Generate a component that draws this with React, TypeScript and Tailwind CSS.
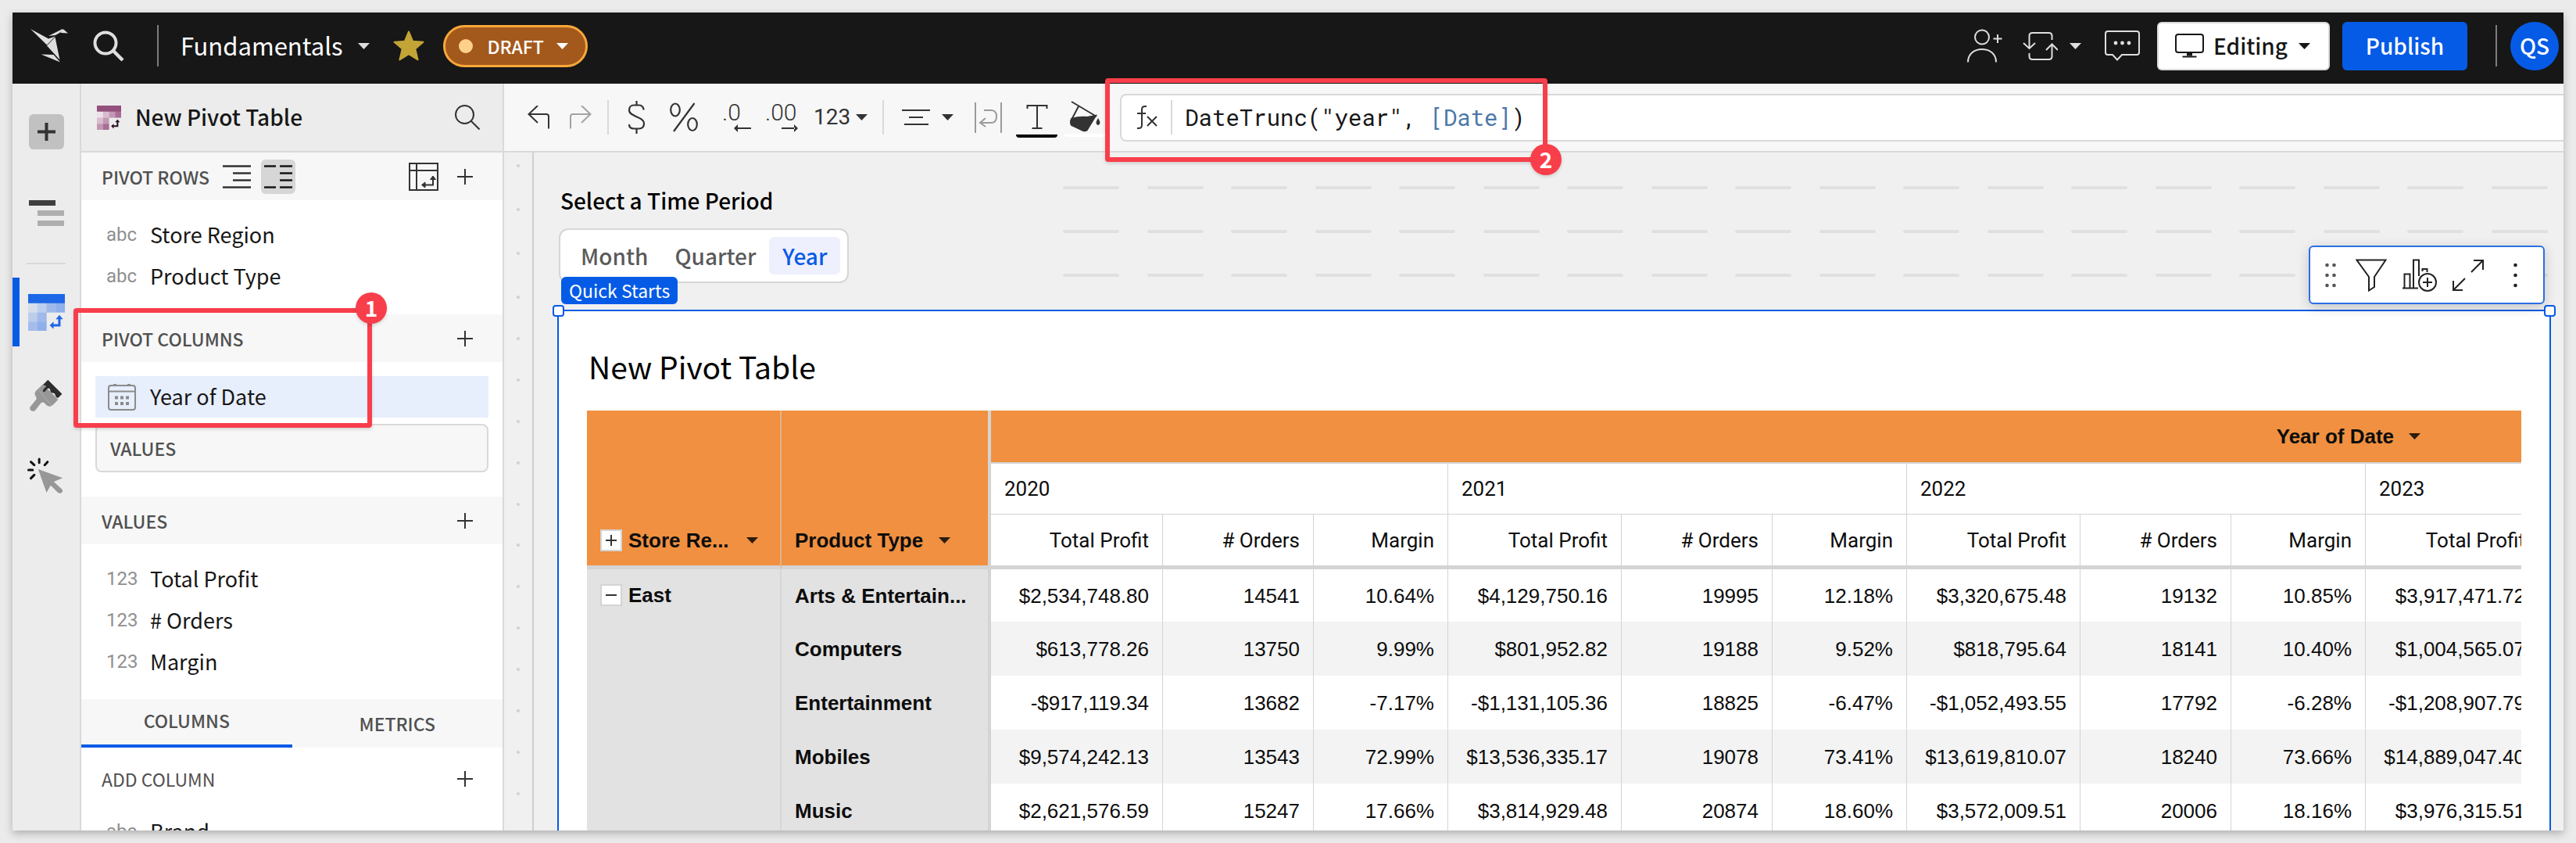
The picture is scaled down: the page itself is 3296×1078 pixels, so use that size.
import type { ReactNode } from "react";

const UI_FONT = "font-['Noto_Sans_CJK_SC',sans-serif]";

/* ---------- icons ---------- */

function Caret({ className = "" }: { className?: string }) {
  return (
    <svg className={`h-2 w-[15px] shrink-0 ${className}`} viewBox="0 0 15 8" fill="currentColor" aria-hidden="true">
      <path d="M0 0h15L7.500 8z" />
    </svg>
  );
}

function Plus({ className = "" }: { className?: string }) {
  return (
    <svg className={`size-5 shrink-0 ${className}`} viewBox="0 0 20 20" stroke="#333" strokeWidth="2" aria-hidden="true">
      <path d="M10 0v20M0 10h20" />
    </svg>
  );
}

function Logo() {
  return (
    <svg className="h-[43px] w-12 shrink-0" viewBox="0 0 48 43" fill="#dedede" aria-hidden="true">
      <path d="M0 0l23 12.500 8.500-3-10.500 11z" />
      <path d="M23 9L41 0l1 2.200L32 8z" />
      <path d="M42 .2l6 5.300-9.500-.6z" />
      <path d="M31.500 10.500L21 21.500l16.500 18z" />
      <path d="M13.500 32.500l16 .5L38 42.500z" />
    </svg>
  );
}

function StarIcon() {
  return (
    <svg className="size-10" viewBox="0 0 40 40" fill="#c2a437" stroke="#c2a437" strokeWidth="2" strokeLinejoin="round" aria-hidden="true">
      <path d="M20 1.500l5.200 12.300 13.300 1-10.200 8.600 3.300 14L20 30.200 8.400 37.400l3.300-14L1.500 14.800l13.300-1z" />
    </svg>
  );
}

function PivotGlyph({ head, cells, arrow, className }: { head: string; cells: string[]; arrow: string; className: string }) {
  const spots = [[0, 35], [35, 35], [70, 35], [105, 35], [0, 70], [35, 70], [0, 105], [35, 105]];
  return (
    <svg className={className} viewBox="0 0 140 140" aria-hidden="true">
      <rect width="140" height="36" fill={head} />
      {spots.map(([x, y], i) => (
        <rect key={i} x={x} y={y} width="35.500" height="35.500" fill={cells[i]} />
      ))}
      <path d="M119 92v27H92" fill="none" stroke={arrow} strokeWidth="9" />
      <path d="M105 96l14-16 14 16zM97 105l-15 14 15 14z" fill={arrow} />
    </svg>
  );
}

function BrushIcon() {
  return (
    <svg className="h-[43px] w-[46px]" viewBox="0 0 140 130" aria-hidden="true">
      <path
        fill="#979797"
        d="M58 22L30 48q-8 10 0 22 6 8-1 14L11 106q-8 8-2 16 8 8 18 2l22-28q6-6 14-2 16 22 32 10l22-22z"
      />
      <path d="M40 44l52 62" stroke="#bdbdbd" strokeWidth="2" />
      <path
        fill="#2d2d2d"
        d="M77 5l55 55-14 14q-8 4-12-8-2-10-10-10-10 0-10-12-4-10-12-4L64 52q-8 2-6-8l12-14-12-6z"
      />
    </svg>
  );
}

function CursorIcon() {
  return (
    <svg className="h-12 w-[47px]" viewBox="0 0 140 144" aria-hidden="true">
      <path fill="#979797" d="M44 48l94 34-34 14 30 28q8 8 0 14-8 6-16-2L92 110l-16 28z" />
      <path
        d="M48 9v14M80 20L69 32M16 20l13 12M7 51h16M16 83l13-13"
        stroke="#111"
        strokeWidth="9"
        strokeLinecap="round"
      />
    </svg>
  );
}

function CalendarIcon() {
  return (
    <svg className="h-[34px] w-9" viewBox="0 0 36 34" fill="none" stroke="#8b8b8b" strokeWidth="2" aria-hidden="true">
      <rect x="1" y="2" width="34" height="31" rx="3" />
      <path d="M1 9.500h34" />
      <path d="M9 0v2M27 0v2" strokeWidth="4" />
      <path d="M9 17.500h4M16 17.500h4M23 17.500h4M9 25h4M16 25h4M23 25h4" strokeWidth="4" />
    </svg>
  );
}

/* ---------- header ---------- */

function Header() {
  return (
    <header className={`flex h-[91px] shrink-0 items-center bg-[#171717] pr-1.5 pb-1.5 pl-[23px] text-white ${UI_FONT}`}>
      <Logo />
      <button aria-label="Search" className="ml-8">
        <svg className="size-10" viewBox="0 0 40 40" fill="none" stroke="#dedede" strokeWidth="4" aria-hidden="true">
          <circle cx="16" cy="16" r="13.500" />
          <path d="M26 26l12 12" strokeWidth="4.500" />
        </svg>
      </button>
      <span className="ml-[42px] h-[53px] w-0.5 bg-[#7c7c7c]" />
      <button className="ml-7 flex items-center gap-5 text-[31px] leading-10">
        <span className="-mt-0.5">Fundamentals</span>
        <Caret className="text-[#dedede]" />
      </button>
      <button aria-label="Favorite" className="ml-[30px]">
        <StarIcon />
      </button>
      <button className="ml-6 flex h-[54px] w-[185px] items-center rounded-full border-[3px] border-[#f9a83a] bg-[#a3591c] pl-[17px] text-[23px] leading-8 font-medium">
        <span className="size-[18px] rounded-full bg-[#ffd08a]" />
        <span className="ml-[18px]">DRAFT</span>
        <Caret className="ml-4" />
      </button>

      <div className="ml-auto flex items-center">
        <button aria-label="Share">
          <svg className="h-[43px] w-[45px]" viewBox="0 0 45 43" fill="none" stroke="#dedede" strokeWidth="2" aria-hidden="true">
            <circle cx="19" cy="10.500" r="9" />
            <path d="M1 42.500C1 32 9 26 19 26s18 6 18 16.500M39 7v11M33.500 12.500h11" />
          </svg>
        </button>
        <button className="ml-[26px] flex items-center gap-[15px]" aria-label="Versions">
          <svg className="h-9 w-[45px]" viewBox="0 0 45 36" fill="none" stroke="#dedede" strokeWidth="2" aria-hidden="true">
            <path d="M37.500 10V5q0-4-4-4H12.500q-4 0-4 4v15M1 14l7.500 7 7.500-7M8.500 27v4q0 4 4 4h21q4 0 4-4V16M30 23l7.500-7.500L45 23" />
          </svg>
          <Caret className="text-[#dedede]" />
        </button>
        <button aria-label="Comments" className="ml-[30px]">
          <svg className="h-[39px] w-[45px]" viewBox="0 0 45 39" fill="none" stroke="#dedede" strokeWidth="2" aria-hidden="true">
            <path d="M4 1h37q3 0 3 3v24q0 3-3 3H22l-6 6.500L10 31H4q-3 0-3-3V4q0-3 3-3z" />
            <g fill="#dedede" stroke="none">
              <circle cx="14" cy="16" r="2.400" />
              <circle cx="22.500" cy="16" r="2.400" />
              <circle cx="31" cy="16" r="2.400" />
            </g>
          </svg>
        </button>
        <button className="ml-[22px] flex h-[62px] w-[221px] items-center rounded-md border-2 border-[#dadada] bg-white pl-[21px] text-[28px] leading-10 font-medium text-[#171717]">
          <svg className="h-[31px] w-[37px]" viewBox="0 0 37 31" fill="none" stroke="#171717" strokeWidth="2" aria-hidden="true">
            <rect x="1" y="1" width="35" height="23" rx="3" />
            <path d="M9.500 29.500h18" />
            <path d="M15 26.500h7" strokeWidth="4" />
          </svg>
          <span className="-mt-0.5 ml-3">Editing</span>
          <Caret className="ml-3.5" />
        </button>
        <button className="ml-4 h-[62px] w-40 rounded-md bg-[#055be6] pb-0.5 text-[28px] leading-10 font-medium">Publish</button>
        <span className="ml-9 h-[53px] w-0.5 bg-[#7c7c7c]" />
        <button className="ml-[17px] size-[62px] rounded-full bg-[#055be6] pb-0.5 text-[28px] leading-10 font-medium">QS</button>
      </div>
    </header>
  );
}

/* ---------- left rail ---------- */

function Rail() {
  return (
    <nav className="flex w-[88px] shrink-0 flex-col border-r-2 border-[#d9d9d9] bg-[#ececec]" aria-label="Panels">
      <button aria-label="Add element" className="mt-[39px] ml-[21px] flex size-[45px] items-center justify-center rounded-md bg-[#c1c1c1]">
        <svg className="size-[23px]" viewBox="0 0 23 23" stroke="#333" strokeWidth="4" aria-hidden="true">
          <path d="M11.500 0v23M0 11.500h23" />
        </svg>
      </button>
      <button aria-label="Outline" className="mt-[65px] ml-[21px] flex w-[45px] flex-col gap-1.5">
        <span className="h-[7px] w-[34px] bg-[#3f3f3f]" />
        <span className="h-[7px] w-[34px] self-end bg-[#aeaeae]" />
        <span className="h-[7px] w-[34px] self-end bg-[#aeaeae]" />
      </button>
      <span className="mx-[18px] mt-[47px] h-0.5 bg-[#d9d9d9]" />
      <button aria-label="Element properties" className="mt-[17px] flex h-[88px] items-center border-l-[9px] border-[#055be6] pl-[11px]">
        <PivotGlyph
          className="size-[47px]"
          head="#1e67e6"
          arrow="#1e67e6"
          cells={["#d6deeb", "#bccfee", "#9fbaea", "#8fb0ea", "#bccdec", "#9fbaea", "#a4bcea", "#8fb0ea"]}
        />
      </button>
      <button aria-label="Element format" className="mt-[41px] ml-5">
        <BrushIcon />
      </button>
      <button aria-label="Actions" className="mt-[57px] ml-[18px]">
        <CursorIcon />
      </button>
    </nav>
  );
}

/* ---------- side panel ---------- */

function SectionBar({ title, children }: { title: string; children?: ReactNode }) {
  return (
    <div className="flex h-[61px] shrink-0 items-center bg-[#f7f7f7] pr-[38px] pl-[26px] text-[23px] leading-8 font-medium text-[#505050]">
      <h3>{title}</h3>
      {children}
      <button aria-label={`Add to ${title}`} className={children ? "ml-6" : "ml-auto"}>
        <Plus />
      </button>
    </div>
  );
}

function Field({ kind, name }: { kind: string; name: string }) {
  return (
    <li className="flex h-[53px] items-center pl-8">
      <span className="w-14 font-['Roboto',sans-serif] text-2xl leading-8 text-[#8f8f8f]">{kind}</span>
      <span>{name}</span>
    </li>
  );
}

function SidePanel() {
  return (
    <aside className={`flex w-[541px] shrink-0 flex-col border-r-2 border-[#d9d9d9] bg-white text-[27px] leading-10 text-[#171717] ${UI_FONT}`}>
      <div className="flex h-[88px] shrink-0 items-center border-b-2 border-[#d9d9d9] bg-[#ececec] pr-[29px] pl-5">
        <PivotGlyph
          className="size-[31px]"
          head="#93507c"
          arrow="#2b1020"
          cells={["#eee1ea", "#d8bccf", "#c397b4", "#a96e95", "#d8bccf", "#c397b4", "#c397b4", "#a96e95"]}
        />
        <h2 className="-mt-0.5 ml-[18px] text-[28px] font-medium">New Pivot Table</h2>
        <button aria-label="Search columns" className="ml-auto">
          <svg className="size-8" viewBox="0 0 32 32" fill="none" stroke="#333" strokeWidth="2" aria-hidden="true">
            <circle cx="12.500" cy="12.500" r="11.500" />
            <path d="M20.500 20.500L31.500 31.500" />
          </svg>
        </button>
      </div>

      <SectionBar title="PIVOT ROWS">
        <button aria-label="Single row header" className="ml-[17px]">
          <svg className="h-8 w-9" viewBox="0 0 36 32" stroke="#333" strokeWidth="2.500" aria-hidden="true">
            <path d="M0 2.500h36M13 11.500h23M13 20.500h23M0 29.500h36" />
          </svg>
        </button>
        <button aria-label="Separate columns" className="ml-[13px] flex size-11 items-center justify-center rounded-md bg-[#d6d6d6]">
          <svg className="h-8 w-9" viewBox="0 0 36 32" stroke="#171717" strokeWidth="2.500" aria-hidden="true">
            <path d="M0 2.500h15M20 2.500h16M20 11.500h16M20 20.500h16M0 29.500h15M20 29.500h16" />
          </svg>
        </button>
        <button aria-label="Swap rows and columns" className="ml-auto">
          <svg className="h-9 w-[38px]" viewBox="0 0 38 36" fill="none" stroke="#333" strokeWidth="2" aria-hidden="true">
            <path d="M1 1h36v34H1zM1 10h36M10 1v34M31 18v10.500H18" />
            <path d="M27.500 21.500L31 17l3.500 4.500zM21 25l-4.500 3.500L21 32z" fill="#333" strokeWidth="1" />
          </svg>
        </button>
      </SectionBar>
      <ul className="pt-[17px] pb-[23px]">
        <Field kind="abc" name="Store Region" />
        <Field kind="abc" name="Product Type" />
      </ul>

      <SectionBar title="PIVOT COLUMNS" />
      <div className="px-[18px] pt-[18px] pb-[31px]">
        <div className="flex h-[53px] items-center bg-[#e7eefc] pl-4">
          <CalendarIcon />
          <span className="-mt-0.5 ml-[18px]">Year of Date</span>
        </div>
        <div className="mt-2 flex h-[62px] items-center rounded-lg border-2 border-[#d9d9d9] bg-[#f7f7f7] pl-[17px] text-[23px] leading-8 font-medium text-[#505050]">
          VALUES
        </div>
      </div>

      <SectionBar title="VALUES" />
      <ul className="pt-[17px] pb-[22px]">
        <Field kind="123" name="Total Profit" />
        <Field kind="123" name="# Orders" />
        <Field kind="123" name="Margin" />
      </ul>

      <div role="tablist" className="flex h-[62px] shrink-0 bg-[#f7f7f7] text-[23px] leading-8 font-medium text-[#505050]">
        <button role="tab" aria-selected="true" className="flex-1 border-b-4 border-[#055be6] pb-1">
          COLUMNS
        </button>
        <button role="tab" aria-selected="false" className="flex-1">
          METRICS
        </button>
      </div>
      <div className="flex h-20 shrink-0 items-center pr-[38px] pl-[26px] text-[23px] leading-8 text-[#505050]">
        <span>ADD COLUMN</span>
        <button aria-label="Add column" className="ml-auto">
          <Plus />
        </button>
      </div>
      <ul>
        <Field kind="abc" name="Brand" />
      </ul>
    </aside>
  );
}

/* ---------- formatting toolbar ---------- */

function Divider({ className }: { className: string }) {
  return <span className={`h-11 w-0.5 shrink-0 bg-[#d9d9d9] ${className}`} />;
}

function Toolbar() {
  return (
    <div className="flex h-[88px] shrink-0 items-center border-b-2 border-[#d9d9d9] bg-[#f7f7f7] pl-[30px] font-['Roboto',sans-serif] text-[#333]">
      <button aria-label="Undo">
        <svg className="h-[30px] w-[29px]" viewBox="0 0 29 30" fill="none" stroke="#333" strokeWidth="2" aria-hidden="true">
          <path d="M1 11h23q3 0 3 3v15.500M13 0L1.500 11 13 22" />
        </svg>
      </button>
      <button aria-label="Redo" className="ml-6">
        <svg className="h-[30px] w-[29px]" viewBox="0 0 29 30" fill="none" stroke="#a3a3a3" strokeWidth="2" aria-hidden="true">
          <path d="M28 11H5q-3 0-3 3v15.500M16 0l11.500 11L16 22" />
        </svg>
      </button>
      <Divider className="ml-5" />
      <button aria-label="Currency" className="ml-[25px]">
        <svg className="h-[42px] w-[21px]" viewBox="0 0 21 42" fill="none" stroke="#333" strokeWidth="2.200" aria-hidden="true">
          <path d="M10.500 0v6M10.500 36v6M19.500 11.500C19.500 8 17 5.500 14 5.500H7c-3.500 0-6 2.500-6 6.500 0 8.500 19 8 19 17 0 4-2.500 6.500-6 6.500H7c-3.500 0-6-2-6-5.500" />
        </svg>
      </button>
      <button aria-label="Percent" className="ml-8">
        <svg className="h-[38px] w-9" viewBox="0 0 36 38" fill="none" stroke="#333" strokeWidth="2.200" aria-hidden="true">
          <ellipse cx="7" cy="9.500" rx="5.800" ry="8" />
          <ellipse cx="29" cy="28" rx="5.800" ry="8" />
          <path d="M31.500 1L5 37" />
        </svg>
      </button>
      <button aria-label="Decrease decimals" className="ml-[31px] flex w-[37px] flex-col">
        <span className="self-start text-3xl leading-[28px] font-light">.0</span>
        <svg className="h-3 w-[22px] self-end" viewBox="0 0 22 12" aria-hidden="true">
          <path d="M0 6l5-5v10zM4 5h18v2H4z" fill="#333" />
        </svg>
      </button>
      <button aria-label="Increase decimals" className="ml-[18px] flex w-[42px] flex-col">
        <span className="self-start text-3xl leading-[28px] font-light">.00</span>
        <svg className="h-3 w-[21px] self-end" viewBox="0 0 21 12" aria-hidden="true">
          <path d="M21 6l-5-5v10zM0 5h17v2H0z" fill="#333" />
        </svg>
      </button>
      <button className="ml-5 flex items-center gap-[7px] text-[28px] leading-8">
        123
        <Caret />
      </button>
      <Divider className="ml-[19px]" />
      <button aria-label="Align" className="ml-[23px] flex items-center gap-[15px]">
        <svg className="h-[22px] w-9" viewBox="0 0 36 22" stroke="#333" strokeWidth="2.200" aria-hidden="true">
          <path d="M0 2h36M9 11h18M3 20h31" />
        </svg>
        <Caret />
      </button>
      <button aria-label="Wrap text" className="ml-[27px]">
        <svg className="h-[39px] w-[35px]" viewBox="0 0 35 39" fill="none" stroke="#9b9b9b" strokeWidth="2" aria-hidden="true">
          <path d="M1 0v39M34 0v39M12 10h9q7 0 7 8t-7 8H8M14 20l-7 6 7 5" />
        </svg>
      </button>
      <button aria-label="Text color" className="mt-2 ml-[18px] flex w-[53px] flex-col items-center gap-[7px]">
        <svg className="h-8 w-7" viewBox="0 0 28 32" fill="none" stroke="#333" strokeWidth="2" aria-hidden="true">
          <path d="M1.500 6V2h25v4M14 2v29M7.500 31h13" />
        </svg>
        <span className="h-1 w-full rounded-b-sm bg-black" />
      </button>
      <button aria-label="Fill color" className="mt-1 ml-[9px] flex w-[53px] flex-col items-center gap-0.5">
        <svg className="h-10 w-[39px]" viewBox="0 0 39 40" fill="none" stroke="#333" strokeWidth="2" aria-hidden="true">
          <path d="M2 1l32 19M11 7L1 26" />
          <path d="M2 23q10-3 20-2l11-2-11 18q-2 2-5 1L2 31q-2-3 0-8z" fill="#333" />
          <path d="M36 24q3 5 0 6-3-1 0-6z" fill="#333" />
        </svg>
        <span className="h-1 w-full rounded-b-sm bg-white" />
      </button>
      <div className="ml-[18px] flex h-[61px] flex-1 items-center rounded-l-lg border-2 border-r-0 border-[#d9d9d9] bg-white">
        <svg className="ml-[19px] h-[30px] w-7" viewBox="0 0 28 30" fill="none" stroke="#333" strokeWidth="2" aria-hidden="true">
          <path d="M13 1h-2q-4 0-4 4v20q0 4-4 4H1M1 10h11M14 14l12 12M26 14L14 26" />
        </svg>
        <Divider className="ml-4" />
        <div
          role="textbox"
          aria-label="Formula"
          contentEditable
          suppressContentEditableWarning
          className="ml-4 flex-1 font-['Roboto_Mono','Liberation_Mono',monospace] text-[29px] leading-10 whitespace-pre text-[#171717] outline-none"
        >
          {'DateTrunc("year", '}
          <span className="text-[#4b78a8]">[Date]</span>)
        </div>
      </div>
    </div>
  );
}

/* ---------- pivot table ---------- */

const YEARS = ["2020", "2021", "2022"];
const ROWS: { type: string; cells: string[] }[] = [
  { type: "Arts & Entertain...", cells: ["$2,534,748.80", "14541", "10.64%", "$4,129,750.16", "19995", "12.18%", "$3,320,675.48", "19132", "10.85%", "$3,917,471.72"] },
  { type: "Computers", cells: ["$613,778.26", "13750", "9.99%", "$801,952.82", "19188", "9.52%", "$818,795.64", "18141", "10.40%", "$1,004,565.07"] },
  { type: "Entertainment", cells: ["-$917,119.34", "13682", "-7.17%", "-$1,131,105.36", "18825", "-6.47%", "-$1,052,493.55", "17792", "-6.28%", "-$1,208,907.79"] },
  { type: "Mobiles", cells: ["$9,574,242.13", "13543", "72.99%", "$13,536,335.17", "19078", "73.41%", "$13,619,810.07", "18240", "73.66%", "$14,889,047.40"] },
  { type: "Music", cells: ["$2,621,576.59", "15247", "17.66%", "$3,814,929.48", "20874", "18.60%", "$3,572,009.51", "20006", "18.16%", "$3,976,315.51"] },
];
const MEASURES = ["Total Profit", "# Orders", "Margin"];

function Toggle({ open }: { open: boolean }) {
  return (
    <button aria-label={open ? "Collapse" : "Expand"} className="flex size-7 items-center justify-center border-2 border-[#d4d4d4] bg-white">
      <svg className="size-3.5" viewBox="0 0 14 14" stroke="#333" strokeWidth="2" aria-hidden="true">
        <path d={open ? "M0 7h14" : "M0 7h14M7 0v14"} />
      </svg>
    </button>
  );
}

function PivotTable() {
  return (
    <div className="shrink-0 overflow-hidden">
      <table className="w-[2498px] table-fixed border-separate border-spacing-0 font-['Liberation_Sans',Arial,sans-serif] text-[26px] leading-8 text-[#0d0d0d]">
        <colgroup>
          <col className="w-[249px]" />
          <col className="w-[268px]" />
          <col className="w-[220px]" />
          <col className="w-[193px]" />
          <col className="w-[172px]" />
          <col className="w-[222px]" />
          <col className="w-[193px]" />
          <col className="w-[172px]" />
          <col className="w-[222px]" />
          <col className="w-[193px]" />
          <col className="w-[172px]" />
          <col className="w-[222px]" />
        </colgroup>
        <thead>
          <tr className="h-[68px]">
            <th rowSpan={3} className="border-r-2 border-b-[5px] border-r-[#e0b48c] border-b-[#d4d4d4] bg-[#f09040] pb-4 pl-[17px] align-bottom">
              <div className="flex items-center gap-2">
                <Toggle open={false} />
                <span>Store Re...</span>
                <Caret className="ml-3.5 text-[#2b1c10]" />
              </div>
            </th>
            <th rowSpan={3} className="border-r-4 border-b-[5px] border-[#d4d4d4] bg-[#f09040] pb-4 pl-[17px] align-bottom">
              <div className="flex items-center gap-5">
                <span>Product Type</span>
                <Caret className="text-[#2b1c10]" />
              </div>
            </th>
            <th colSpan={10} className="border-b-2 border-[#d4d4d4] bg-[#f09040] pr-[152px]">
              <div className="flex items-center justify-end gap-[19px]">
                <span>Year of Date</span>
                <Caret className="text-[#2b1c10]" />
              </div>
            </th>
          </tr>
          <tr className="h-[65px] text-left font-['Roboto',sans-serif]">
            {YEARS.map((y) => (
              <th key={y} colSpan={3} className="border-r border-b border-[#d4d4d4] px-[17px] font-normal">
                {y}
              </th>
            ))}
            <th className="border-b border-[#d4d4d4] px-[17px] font-normal">2023</th>
          </tr>
          <tr className="h-[70px] text-right font-['Roboto',sans-serif]">
            {ROWS[0].cells.map((_, i) => (
              <th key={i} className="border-r border-b-[5px] border-[#d4d4d4] px-[17px] font-normal whitespace-nowrap">
                {MEASURES[i % 3]}
              </th>
            ))}
          </tr>
        </thead>
        <tbody>
          {ROWS.map((row, r) => (
            <tr key={row.type} className="h-[69px] text-right first:h-[67px] even:bg-[#f3f3f3]">
              {r === 0 && (
                <th rowSpan={ROWS.length} className="border-r-2 border-[#d6d6d6] bg-[#e2e2e2] pt-[17px] pl-[17px] align-top">
                  <div className="flex items-center gap-2">
                    <Toggle open />
                    <span>East</span>
                  </div>
                </th>
              )}
              <th className="border-r-4 border-[#d4d4d4] bg-[#e2e2e2] pl-[17px] text-left whitespace-nowrap">{row.type}</th>
              {row.cells.map((c, i) => (
                <td key={i} className="border-r border-[#d4d4d4] pr-[17px] whitespace-nowrap">
                  {c}
                </td>
              ))}
            </tr>
          ))}
        </tbody>
      </table>
    </div>
  );
}

/* ---------- canvas ---------- */

function ElementMenu() {
  return (
    <div className="absolute -top-[84px] right-1.5 flex h-[75px] w-[302px] items-center rounded-md border-2 border-[#2a6fe2] bg-white pl-[19px] shadow-[0_4px_16px_rgba(0,0,0,0.18)]">
      <button aria-label="Drag">
        <svg className="h-8 w-3.5" viewBox="0 0 14 32" fill="#555" aria-hidden="true">
          {[3, 16, 29].map((y) => (
            <g key={y}>
              <circle cx="2.500" cy={y} r="2.300" />
              <circle cx="11.500" cy={y} r="2.300" />
            </g>
          ))}
        </svg>
      </button>
      <button aria-label="Filter" className="ml-[25px]">
        <svg className="h-[42px] w-10" viewBox="0 0 40 42" fill="none" stroke="#222" strokeWidth="2" aria-hidden="true">
          <path d="M1.500 1.500h37L24 23v13l-7 4.500V23z" />
        </svg>
      </button>
      <button aria-label="Create chart" className="ml-5">
        <svg className="h-[42px] w-11" viewBox="0 0 44 42" fill="none" stroke="#222" strokeWidth="2" aria-hidden="true">
          <path d="M0 37.500h20M2.500 37V19.500h7V37M14 37V1.500h7V22M25.500 16V13h6v4" />
          <circle cx="32" cy="30" r="11" fill="#fff" />
          <path d="M32 24v12M26 30h12" />
        </svg>
      </button>
      <button aria-label="Maximize" className="ml-5">
        <svg className="size-10" viewBox="0 0 40 40" fill="none" stroke="#222" strokeWidth="2" aria-hidden="true">
          <path d="M24 16L39 1M27 1h12v12M16 24L1 39M1 27v12h12" />
        </svg>
      </button>
      <button aria-label="More" className="ml-[38px]">
        <svg className="h-8 w-[5px]" viewBox="0 0 5 32" fill="#222" aria-hidden="true">
          <circle cx="2.500" cy="3" r="2.300" />
          <circle cx="2.500" cy="16" r="2.300" />
          <circle cx="2.500" cy="29" r="2.300" />
        </svg>
      </button>
    </div>
  );
}

function Canvas() {
  const dots = Array.from({ length: 13 }, (_, i) => i);
  const dashes = Array.from({ length: 18 }, (_, i) => i);
  return (
    <main className={`flex min-h-0 flex-1 bg-[#f0f0f0] ${UI_FONT}`}>
      <div className="flex w-[38px] shrink-0 flex-col items-center border-r-2 border-[#cfcfcf] pt-[15px] pb-[45px]">
        {dots.slice(0, 3).map((d) => (
          <span key={d} className="mb-[52px] size-1 shrink-0 rounded-full bg-[#d0d0d0]" />
        ))}
        <div className="flex flex-1 flex-col justify-between">
          {dots.map((d) => (
            <span key={d} className="size-1 rounded-full bg-[#d0d0d0]" />
          ))}
        </div>
      </div>

      <div className="flex min-w-0 flex-1 flex-col pr-4 pl-[30px]">
        <div className="flex h-[201px] shrink-0 pr-1">
          <div className="w-[647px] shrink-0 pt-[41px] pl-0.5 text-[28px] leading-10 font-medium">
            <div className="pl-0.5 text-black">Select a Time Period</div>
            <div className="mt-4 flex w-fit rounded-xl border-2 border-[#d6d6d6] bg-white p-[9px] text-[#5a5a5a]">
              <button className="h-12 px-[17px]">Month</button>
              <button className="h-12 px-[17px]">Quarter</button>
              <button className="h-12 rounded-md bg-[#eff0fd] px-[17px] text-[#055be6]">Year</button>
            </div>
          </div>
          <div className="flex flex-1 flex-col gap-[52px] pt-[43px]">
            {[0, 1, 2].map((r) => (
              <div key={r} className="flex justify-between">
                {dashes.map((d) => (
                  <span key={d} className="h-1 w-[72px] rounded-full bg-[#e0e0e0]" />
                ))}
              </div>
            ))}
          </div>
        </div>

        <section className="relative min-h-0 flex-1 border-2 border-b-0 border-[#055be6] bg-white pr-9 pl-9">
          <span className="absolute -top-11 left-[3px] h-[35px] rounded-md bg-[#055be6] px-2.5 text-[23px] leading-[35px] text-white">Quick Starts</span>
          <span className="absolute -top-2 -left-2 size-[15px] rounded-sm border-2 border-[#055be6] bg-white" />
          <span className="absolute -top-2 -right-2 size-[15px] rounded-sm border-2 border-[#055be6] bg-white" />
          <ElementMenu />
          <div className="flex h-full flex-col overflow-hidden">
            <h1 className="mt-[46px] mb-[33px] pl-0.5 text-[39px] leading-[48px] text-black">New Pivot Table</h1>
            <PivotTable />
          </div>
        </section>
      </div>
    </main>
  );
}

/* ---------- call-outs ---------- */

function Badge({ n, className }: { n: number; className: string }) {
  return (
    <span className={`absolute flex size-10 items-center justify-center rounded-full bg-[#f93e4b] pb-0.5 text-[28px] leading-8 font-bold text-white shadow-[0_2px_4px_rgba(0,0,0,0.15)] ${UI_FONT} ${className}`}>
      {n}
    </span>
  );
}

export default function App() {
  return (
    <div className="relative h-screen overflow-hidden bg-[#ebebeb] p-4">
      <div className="flex h-full flex-col overflow-hidden shadow-[0_4px_10px_rgba(0,0,0,0.25)]">
        <Header />
        <div className="flex min-h-0 flex-1">
          <Rail />
          <SidePanel />
          <div className="flex min-w-0 flex-1 flex-col">
            <Toolbar />
            <Canvas />
          </div>
        </div>
      </div>

      <div className="absolute top-[394px] left-[94px] h-[153px] w-[382px] rounded-sm border-[6px] border-[#f93e4b] shadow-[0_2px_4px_rgba(0,0,0,0.15)]">
        <Badge n={1} className="-top-[26px] -right-[25px]" />
      </div>
      <div className="absolute top-[100px] left-[1414px] h-[107px] w-[566px] rounded-sm border-[6px] border-[#f93e4b] shadow-[0_2px_4px_rgba(0,0,0,0.15)]">
        <Badge n={2} className="-right-6 -bottom-[23px]" />
      </div>
    </div>
  );
}
